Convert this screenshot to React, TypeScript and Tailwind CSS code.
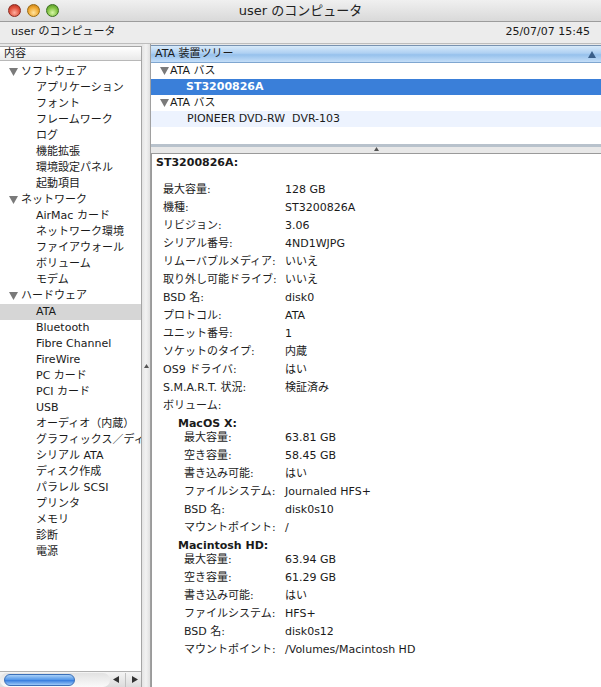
import React from "react";

type SideItem = { label: string; level: 0 | 1; selected?: boolean };

const sideItems: SideItem[] = [
  { label: "ソフトウェア", level: 0 },
  { label: "アプリケーション", level: 1 },
  { label: "フォント", level: 1 },
  { label: "フレームワーク", level: 1 },
  { label: "ログ", level: 1 },
  { label: "機能拡張", level: 1 },
  { label: "環境設定パネル", level: 1 },
  { label: "起動項目", level: 1 },
  { label: "ネットワーク", level: 0 },
  { label: "AirMac カード", level: 1 },
  { label: "ネットワーク環境", level: 1 },
  { label: "ファイアウォール", level: 1 },
  { label: "ボリューム", level: 1 },
  { label: "モデム", level: 1 },
  { label: "ハードウェア", level: 0 },
  { label: "ATA", level: 1, selected: true },
  { label: "Bluetooth", level: 1 },
  { label: "Fibre Channel", level: 1 },
  { label: "FireWire", level: 1 },
  { label: "PC カード", level: 1 },
  { label: "PCI カード", level: 1 },
  { label: "USB", level: 1 },
  { label: "オーディオ（内蔵）", level: 1 },
  { label: "グラフィックス／ディスプレイ", level: 1 },
  { label: "シリアル ATA", level: 1 },
  { label: "ディスク作成", level: 1 },
  { label: "パラレル SCSI", level: 1 },
  { label: "プリンタ", level: 1 },
  { label: "メモリ", level: 1 },
  { label: "診断", level: 1 },
  { label: "電源", level: 1 },
];

const mainRows: [string, string][] = [
  ["最大容量:", "128 GB"],
  ["機種:", "ST3200826A"],
  ["リビジョン:", "3.06"],
  ["シリアル番号:", "4ND1WJPG"],
  ["リムーバブルメディア:", "いいえ"],
  ["取り外し可能ドライブ:", "いいえ"],
  ["BSD 名:", "disk0"],
  ["プロトコル:", "ATA"],
  ["ユニット番号:", "1"],
  ["ソケットのタイプ:", "内蔵"],
  ["OS9 ドライバ:", "はい"],
  ["S.M.A.R.T. 状況:", "検証済み"],
  ["ボリューム:", ""],
];

const volumes: { name: string; rows: [string, string][] }[] = [
  {
    name: "MacOS X:",
    rows: [
      ["最大容量:", "63.81 GB"],
      ["空き容量:", "58.45 GB"],
      ["書き込み可能:", "はい"],
      ["ファイルシステム:", "Journaled HFS+"],
      ["BSD 名:", "disk0s10"],
      ["マウントポイント:", "/"],
    ],
  },
  {
    name: "Macintosh HD:",
    rows: [
      ["最大容量:", "63.94 GB"],
      ["空き容量:", "61.29 GB"],
      ["書き込み可能:", "はい"],
      ["ファイルシステム:", "HFS+"],
      ["BSD 名:", "disk0s12"],
      ["マウントポイント:", "/Volumes/Macintosh HD"],
    ],
  },
];

const Triangle = () => (
  <svg width="9" height="8" viewBox="0 0 9 8" className="shrink-0">
    <polygon points="0,0 9,0 4.5,8" fill="#7a7a7a" />
  </svg>
);

export default function App() {
  return (
    <div className="w-[601px] h-[687px] overflow-hidden flex flex-col bg-[#e8e8e8] text-[#1a1a1a] font-['DejaVu_Sans','Noto_Sans_CJK_JP',sans-serif] text-[11px]">
      {/* Title bar */}
      <div className="relative h-[22px] shrink-0 flex items-center justify-center bg-[linear-gradient(#f0f0f0,#d9d9d9)] border-b border-[#9c9c9c]">
        <div className="absolute left-[8px] top-[4px] flex gap-[6px]">
          <div className="w-[13px] h-[13px] rounded-full border border-[#8a2a20] bg-[radial-gradient(circle_at_50%_70%,#ffb0a0,#e0503c_55%,#a82a1c)]" />
          <div className="w-[13px] h-[13px] rounded-full border border-[#9a6a10] bg-[radial-gradient(circle_at_50%_70%,#ffe4a0,#f0a830_55%,#b87010)]" />
          <div className="w-[13px] h-[13px] rounded-full border border-[#3a7020] bg-[radial-gradient(circle_at_50%_70%,#d8f8a8,#80c040_55%,#4a8a20)]" />
        </div>
        <span className="text-[13px] text-[#222]">user のコンピュータ</span>
      </div>

      {/* Info row */}
      <div className="h-[22px] shrink-0 flex items-center justify-between px-[11px] bg-[#ececec] border-b border-[#bdbdbd]">
        <span>user のコンピュータ</span>
        <span>25/07/07 15:45</span>
      </div>

      {/* Main */}
      <div className="flex-1 flex min-h-0">
        {/* Sidebar */}
        <div className="w-[142px] shrink-0 flex flex-col pt-[2px]">
          <div className="flex-1 flex flex-col bg-white border-t border-r border-[#a5a5a5] min-h-0">
            <div className="h-[14px] shrink-0 flex items-center pl-[4px] bg-[linear-gradient(#ffffff,#e9e9e9)] border-b border-[#b8b8b8] leading-none">
              内容
            </div>
            <div className="flex-1 pt-[3px] overflow-hidden">
              {sideItems.map((it) => (
                <div
                  key={it.label}
                  className={`h-[16px] flex items-center whitespace-nowrap overflow-hidden ${
                    it.level === 0 ? "pl-[9px] gap-[3px]" : "pl-[36px]"
                  } ${it.selected ? "bg-[#d6d6d6]" : ""}`}
                >
                  {it.level === 0 && <Triangle />}
                  <span>{it.label}</span>
                </div>
              ))}
            </div>
            {/* Horizontal scrollbar */}
            <div className="h-[16px] shrink-0 flex items-center border-t border-[#b0b0b0] bg-[linear-gradient(#f4f4f4,#dcdcdc)]">
              <div className="w-[110px] h-[14px] flex items-center pl-[4px] bg-[linear-gradient(#e2e2e2,#fafafa)] rounded-full">
                <div className="w-[71px] h-[12px] rounded-full border border-[#3a6fb8] bg-[linear-gradient(#a8d0f8,#4f94e8_50%,#3a80e0_55%,#9ccaf8)]" />
              </div>
              <div className="flex-1 flex items-center justify-end pr-[3px] gap-[6px] text-[#333]">
                <svg width="6" height="7" viewBox="0 0 6 7">
                  <polygon points="6,0 6,7 0,3.5" fill="#333" />
                </svg>
                <div className="w-px h-[14px] bg-[#c0c0c0]" />
                <svg width="6" height="7" viewBox="0 0 6 7">
                  <polygon points="0,0 0,7 6,3.5" fill="#333" />
                </svg>
              </div>
            </div>
          </div>
        </div>

        {/* Vertical splitter */}
        <div className="w-[9px] shrink-0 flex items-center justify-center bg-[linear-gradient(90deg,#e4e4e4,#f2f2f2,#e0e0e0)] border-r border-[#a0a0a0]">
          <svg width="5" height="4" viewBox="0 0 5 4">
            <polygon points="0,4 5,4 2.5,0" fill="#555" />
          </svg>
        </div>

        {/* Right */}
        <div className="flex-1 flex flex-col min-w-0 pt-[1px]">
          {/* Tree panel */}
          <div className="h-[102px] shrink-0 flex flex-col bg-white border-t border-[#7892b0] border-b-[3px] border-b-[#b8c2cc]">
            <div className="h-[17px] shrink-0 flex items-center justify-between pl-[4px] pr-[5px] bg-[linear-gradient(#d8eafa,#aed0f2_45%,#96c1ec_55%,#c4def8)] border-b border-[#7fa6d0]">
              <span>ATA 装置ツリー</span>
              <svg width="8" height="7" viewBox="0 0 8 7">
                <polygon points="0,7 8,7 4,0" fill="#3a5f8a" />
              </svg>
            </div>
            <div className="h-[16px] flex items-center pl-[9px] gap-[1px]">
              <Triangle />
              <span>ATA バス</span>
            </div>
            <div className="h-[16px] flex items-center pl-[35px] bg-[#3a7fd9] text-white font-bold">
              ST3200826A
            </div>
            <div className="h-[16px] flex items-center pl-[9px] gap-[1px]">
              <Triangle />
              <span>ATA バス</span>
            </div>
            <div className="h-[16px] flex items-center pl-[36px] bg-[#edf3fe] whitespace-pre">
              PIONEER DVD-RW  DVR-103
            </div>
            <div className="flex-1" />
          </div>

          {/* Horizontal splitter */}
          <div className="h-[6px] shrink-0 flex justify-center items-start">
            <svg width="5" height="4" viewBox="0 0 5 4">
              <polygon points="0,4 5,4 2.5,0" fill="#555" />
            </svg>
          </div>

          {/* Detail panel */}
          <div className="flex-1 bg-white border-t border-l border-[#9a9a9a] pl-[4px] pt-[2px] overflow-hidden">
            <div className="h-[15px] flex items-center font-bold">ST3200826A:</div>
            <div className="mt-[10px] pl-[7px]">
              {mainRows.map(([k, v]) => (
                <div key={k} className="h-[18px] flex items-center whitespace-nowrap">
                  <span className="w-[122px] shrink-0 text-[#222]">{k}</span>
                  <span>{v}</span>
                </div>
              ))}
              {volumes.map((vol) => (
                <div key={vol.name}>
                  <div className="h-[14px] flex items-end pl-[15px] font-bold leading-none">
                    {vol.name}
                  </div>
                  {vol.rows.map(([k, v]) => (
                    <div key={k} className="h-[18px] flex items-center whitespace-nowrap">
                      <span className="w-[122px] shrink-0 pl-[21px] text-[#222]">{k}</span>
                      <span>{v}</span>
                    </div>
                  ))}
                </div>
              ))}
            </div>
          </div>
        </div>
      </div>
    </div>
  );
}
